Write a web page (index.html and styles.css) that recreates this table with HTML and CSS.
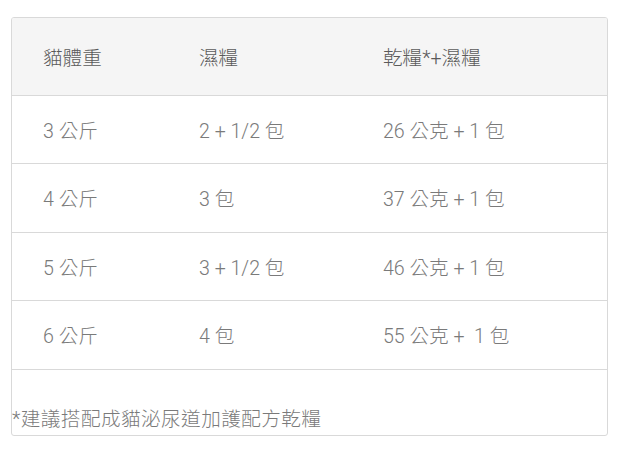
FILE: index.html
```html
<!DOCTYPE html>
<html lang="zh-Hant">
<head>
<meta charset="utf-8">
<link rel="stylesheet" href="styles.css">
</head>
<body>
<div class="card">
  <table class="feed">
    <thead>
      <tr><th>貓體重</th><th>濕糧</th><th>乾糧*+濕糧</th></tr>
    </thead>
    <tbody>
      <tr><td>3 公斤</td><td>2 + 1/2 包</td><td>26 公克 + 1 包</td></tr>
      <tr><td>4 公斤</td><td>3 包</td><td>37 公克 + 1 包</td></tr>
      <tr><td>5 公斤</td><td>3 + 1/2 包</td><td>46 公克 + 1 包</td></tr>
      <tr><td>6 公斤</td><td>4 包</td><td>55 公克 +&nbsp; 1 包</td></tr>
    </tbody>
  </table>
  <p class="note">*建議搭配成貓泌尿道加護配方乾糧</p>
</div>
</body>
</html>
```
FILE: styles.css
```css
html, body { margin: 0; padding: 0; background: #fff; }
body { padding: 17px 0 0 11px; }
.card {
  width: 597px;
  height: 419px;
  border: 1px solid #d9d9d9;
  border-radius: 3px;
  box-sizing: border-box;
  display: flex;
  flex-direction: column;
  overflow: hidden;
  font-family: Roboto, "Noto Sans CJK TC", sans-serif;
  font-size: 19.6px;
  color: #7a7a7a;
}
.feed {
  width: 100%;
  border-collapse: collapse;
  table-layout: fixed;
}
.feed th, .feed td {
  text-align: left;
  padding: 0 0 0 31px;
  font-weight: 300;
}
.feed th:nth-child(1) { width: 125px; }
.feed th:nth-child(2) { width: 153px; }
.feed thead tr { background: #f5f5f5; height: 77px; }
.feed th { color: #5a5a5a; font-weight: 300; }
.feed tbody tr { height: 68.5px; border-top: 1px solid #d9d9d9; }
.feed tbody tr:last-child { border-bottom: 1px solid #d9d9d9; }
.note {
  margin: auto 0 2px 0;
  padding: 0;
  font-weight: 300;
  line-height: 26px;
  letter-spacing: 0.45px;
}
```
